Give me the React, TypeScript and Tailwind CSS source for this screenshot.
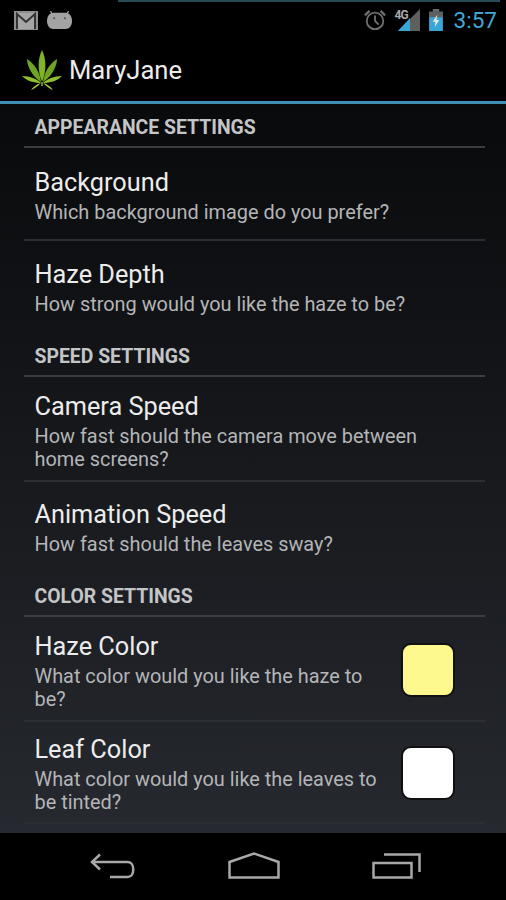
import React from 'react'

function GmailIcon() {
  return (
    <svg width="24" height="19" viewBox="0 0 24 19" className="block">
      <rect x="0" y="0" width="24" height="19" fill="#8e8e8e" />
      <rect x="2" y="2" width="20" height="16" fill="#a6a6a6" />
      <path d="M3 18V3l9 8 9-8v15" fill="none" stroke="#333" strokeWidth="2" />
    </svg>
  )
}

function AndroidIcon() {
  return (
    <svg width="25" height="18" viewBox="0 0 28 20" className="block">
      <path d="M6 4 4 0M22 4l2-4" stroke="#a3a3a3" strokeWidth="1.5" />
      <path d="M7 2h14c4 0 7 4 7 9s-3 9-7 9H7c-4 0-7-4-7-9s3-9 7-9z" fill="#a3a3a3" />
      <circle cx="8" cy="8" r="1.2" fill="#555" />
      <circle cx="20" cy="8" r="1.2" fill="#555" />
    </svg>
  )
}

function AlarmIcon() {
  return (
    <svg width="22" height="22" viewBox="0 0 24 24" fill="none" stroke="#6f6f6f" strokeWidth="2" className="block">
      <circle cx="12" cy="13" r="9" />
      <path d="M12 7v6l4 4" />
      <path d="M1 7l5-5M23 7l-5-5" strokeWidth="2.5" />
    </svg>
  )
}

function SignalIcon() {
  return (
    <div className="relative w-[25px] h-[22px]">
      <svg width="25" height="22" viewBox="0 0 25 22" className="block">
        <path d="M25 0v22H3z" fill="#5f5f5f" />
        <path d="M15 9v13H3z" fill="#39a6d6" />
      </svg>
      <span className="absolute left-0 top-[-1px] text-[12px] leading-[14px] font-bold text-[#a8a8a8] tracking-[-1px]">4G</span>
    </div>
  )
}

function BatteryIcon() {
  return (
    <svg width="14" height="22" viewBox="0 0 15 24" className="block">
      <rect x="4" y="0" width="7" height="3" fill="#6a6a6a" />
      <rect x="0" y="3" width="15" height="21" fill="#39a6d6" />
      <rect x="0" y="3" width="15" height="6" fill="#5f5f5f" />
      <path d="M9 6 4 14h3l-1 6 5-8H8z" fill="#e8e8e8" />
    </svg>
  )
}

function LeafIcon() {
  return (
    <svg width="42" height="42" viewBox="0 0 42 42" className="block">
      <path d="M21 0c4 8 5 20 0 32c-5-12-4-24 0-32z" fill="#7fb32a" />
      <path d="M36 9c0 8-6 18-14 23c1-9 6-18 14-23z" fill="#6fa324" />
      <path d="M6 9c8 5 13 14 14 23C12 27 6 17 6 9z" fill="#6fa324" />
      <path d="M41 26c-5 5-12 7-19 7c4-4 11-7 19-7z" fill="#8fbf30" />
      <path d="M1 26c8 0 15 3 19 7c-7 0-14-2-19-7z" fill="#8fbf30" />
      <path d="M20 33c-3 3-7 6-10 7c2-3 6-6 10-7zM22 33c3 3 7 6 10 7c-2-3-6-6-10-7z" fill="#a8cc3c" />
      <path d="M20 32h2v4h-2z" fill="#5d8a1c" />
    </svg>
  )
}

function BackIcon() {
  return (
    <svg width="46" height="26" viewBox="0 0 46 26" fill="none" stroke="#a8a8a8" strokeWidth="2.5" className="block">
      <path d="M10 1.5 2 9l8 7.5" />
      <path d="M3 9h35c7 0 7 15 0 15H20" />
    </svg>
  )
}

function HomeIcon() {
  return (
    <svg width="52" height="27" viewBox="0 0 52 27" fill="none" stroke="#a8a8a8" strokeWidth="2.5" className="block">
      <path d="M1.5 25.5V10L26 1.5 50.5 10v15.5z" />
    </svg>
  )
}

function RecentIcon() {
  return (
    <svg width="49" height="26" viewBox="0 0 49 26" fill="none" stroke="#a8a8a8" strokeWidth="2.5" className="block">
      <rect x="1.5" y="10" width="38" height="14.5" />
      <path d="M12 1.5h35.5V19" />
    </svg>
  )
}

function SectionHeader({ label, className }: { label: string; className: string }) {
  return (
    <div className={`ml-6 mr-[21px] border-b-2 border-[#3a3d42] flex items-end pl-[10.5px] ${className}`}>
      <span className="text-[19.4px] leading-[22px] font-bold text-[#c4c5c7] pb-[7px]">{label}</span>
    </div>
  )
}

function Row({
  title,
  sub,
  swatch,
  divider = true,
  className,
}: {
  title: string
  sub: string
  swatch?: string
  divider?: boolean
  className: string
}) {
  return (
    <div className={`ml-6 mr-[21px] flex items-center ${divider ? 'border-b-2 border-[#2b2e33]' : ''} ${className}`}>
      <div className="pl-[10.5px] flex-1 min-w-0">
        <div className="text-[25.3px] leading-[30px] text-[#ececec]">{title}</div>
        <div className={`text-[19.9px] leading-[23px] text-[#b4b5b7] mt-[3px] ${swatch ? 'w-[345px]' : 'w-[410px]'}`}>{sub}</div>
      </div>
      {swatch && <div className={`size-[54px] shrink-0 mr-[30px] -mt-[4px] rounded-[10px] border-2 border-[#111] ${swatch}`} />}
    </div>
  )
}

export default function App() {
  return (
    <div className="w-[506px] h-[900px] flex flex-col bg-black overflow-hidden [font-family:Roboto,sans-serif]">
      <div className="h-[2px] ml-[118px] mr-[6px] bg-[#274a55]" />
      <div className="h-[34px] flex items-center pl-[14px] pr-[9px] pt-[2px]">
        <div className="flex items-center gap-[9px]">
          <GmailIcon />
          <AndroidIcon />
        </div>
        <div className="ml-auto flex items-center">
          <AlarmIcon />
          <div className="ml-[9px]"><SignalIcon /></div>
          <div className="ml-[9px]"><BatteryIcon /></div>
          <span className="ml-[11px] text-[22.5px] leading-none text-[#3fa9d8]">3:57</span>
        </div>
      </div>
      <div className="h-[65px] flex items-center pl-[21px] pt-[4px] bg-black">
        <LeafIcon />
        <span className="ml-[6px] text-[25.6px] text-[#ececec]">MaryJane</span>
      </div>
      <div className="h-[3px] bg-[#3f90b4]" />
      <div className="h-[729px] bg-gradient-to-b from-[#090a0c] to-[#26292f] flex flex-col">
        <SectionHeader label="APPEARANCE SETTINGS" className="h-[44px]" />
        <Row title="Background" sub="Which background image do you prefer?" className="h-[93px] pt-[4px]" />
        <Row title="Haze Depth" sub="How strong would you like the haze to be?" divider={false} className="h-[82px] pt-[12px]" />
        <SectionHeader label="SPEED SETTINGS" className="h-[54px]" />
        <Row title="Camera Speed" sub="How fast should the camera move between home screens?" className="h-[105px] pt-[6px]" />
        <Row title="Animation Speed" sub="How fast should the leaves sway?" divider={false} className="h-[82px] pt-[10px]" />
        <SectionHeader label="COLOR SETTINGS" className="h-[53px]" />
        <Row title="Haze Color" sub="What color would you like the haze to be?" swatch="bg-[#fdf98f]" className="h-[105px] pt-[6px]" />
        <Row title="Leaf Color" sub="What color would you like the leaves to be tinted?" swatch="bg-white" className="h-[102px] pt-[5px]" />
      </div>
      <div className="flex-1 bg-black flex items-center pb-[2px]">
        <div className="ml-[90px]"><BackIcon /></div>
        <div className="ml-[92px]"><HomeIcon /></div>
        <div className="ml-[92px]"><RecentIcon /></div>
      </div>
    </div>
  )
}
